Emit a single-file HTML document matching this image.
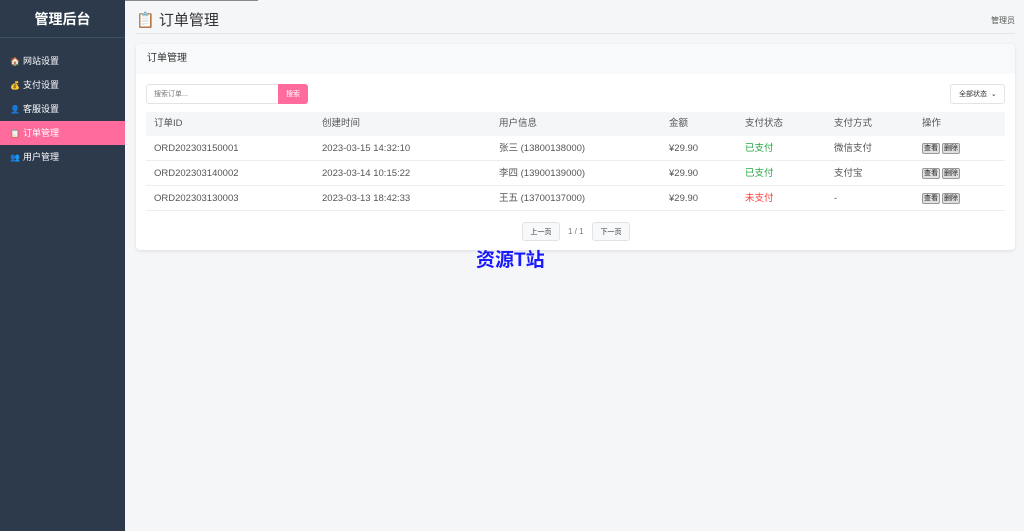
<!DOCTYPE html>
<html><head><meta charset="utf-8"><style>
*{margin:0;padding:0;box-sizing:border-box}
body{width:1024px;height:531px;overflow:hidden;background:#f5f6f8;font-family:"Liberation Sans","Noto Sans CJK SC",sans-serif;color:#444;position:relative;font-size:9px}
.sb{position:absolute;left:0;top:0;width:125px;height:531px;background:#2c3a4c}
.sb h1{color:#fff;font-size:14px;text-align:center;height:38px;line-height:38px;border-bottom:1px solid #3d5166}
.mi{position:absolute;left:0;width:125px;height:24px;line-height:24px;color:#fff;font-size:9px;padding-left:10px}
.mi span{display:inline-block;width:10px;font-size:8px;margin-right:3px}
.mi.act{background:#ff6b9d}
.top{position:absolute;left:125px;top:0;width:133px;height:1px;background:#888}
.hd{position:absolute;left:136px;top:9px;font-size:15px;color:#333}
.hl{position:absolute;left:136px;right:9px;top:33px;height:1px;background:#e6e6e6}
.adm{position:absolute;right:9px;top:15px;font-size:8px;color:#555}
.card{position:absolute;left:136px;top:44px;width:879px;height:206px;background:#fff;border-radius:4px;box-shadow:0 1px 3px rgba(0,0,0,.1)}
.ch{height:30px;background:#f8f9fa;padding-left:11px;line-height:30px;font-size:10px;color:#333;border-radius:4px 4px 0 0}
.in,.bt,.sel,.pg{display:flex;align-items:center}
.in{position:absolute;left:10px;top:40px;width:133px;height:20px;border:1px solid #e3e3e3;border-radius:3px 0 0 3px;font-size:7px;color:#777;padding-left:7px}
.bt{position:absolute;left:142px;top:40px;width:30px;height:20px;background:#ff6b9d;color:#fff;font-size:7px;justify-content:center;border-radius:0 3px 3px 0}
.sel{position:absolute;left:814px;top:40px;width:55px;height:20px;border:1px solid #e3e3e3;border-radius:3px;font-size:7px;color:#333;padding-left:8px}
.row{position:absolute;left:10px;width:859px;height:25px;line-height:25px;border-bottom:1px solid #eee;font-size:9.5px;color:#555}
.row.h{background:#f5f6f8;border:none;height:24px;line-height:24px;color:#555}
.row div{position:absolute;top:0}
.g{color:#28a745}.r{color:#ff3b3b}
.op b{display:inline-block;font-weight:normal;font-size:7px;line-height:10px;height:11px;padding:0 1px;background:#e0e0e0;border:1px solid #999;border-radius:2px;color:#222;margin-right:2px;vertical-align:middle}
.pg{position:absolute;top:178px;height:19px;border:1px solid #e3e3e3;border-radius:3px;background:#f8f9fa;font-size:7px;justify-content:center;color:#333}
.wm{position:absolute;left:476px;top:245px;font-size:19px;font-weight:bold;color:#1a1aff}
</style></head><body>
<div class="top"></div>
<div class="sb"><h1>管理后台</h1>
<div class="mi" style="top:49px"><span>🏠</span>网站设置</div>
<div class="mi" style="top:73px"><span>💰</span>支付设置</div>
<div class="mi" style="top:97px"><span>👤</span>客服设置</div>
<div class="mi act" style="top:121px"><span>📋</span>订单管理</div>
<div class="mi" style="top:145px"><span>👥</span>用户管理</div>
</div>
<div class="hd">📋 订单管理</div><div class="adm">管理员</div><div class="hl"></div>
<div class="card"><div class="ch">订单管理</div>
<div class="in">搜索订单...</div><div class="bt">搜索</div>
<div class="sel">全部状态 &nbsp;⌄</div>
<div class="row h" style="top:68px"><div style="left:8px">订单ID</div><div style="left:176px">创建时间</div><div style="left:353px">用户信息</div><div style="left:523px">金额</div><div style="left:599px">支付状态</div><div style="left:688px">支付方式</div><div style="left:776px">操作</div></div>
<div class="row" style="top:92px"><div style="left:8px">ORD202303150001</div><div style="left:176px">2023-03-15 14:32:10</div><div style="left:353px">张三 (13800138000)</div><div style="left:523px">¥29.90</div><div style="left:599px" class="g">已支付</div><div style="left:688px">微信支付</div><div style="left:776px" class="op"><b>查看</b><b>删除</b></div></div>
<div class="row" style="top:117px"><div style="left:8px">ORD202303140002</div><div style="left:176px">2023-03-14 10:15:22</div><div style="left:353px">李四 (13900139000)</div><div style="left:523px">¥29.90</div><div style="left:599px" class="g">已支付</div><div style="left:688px">支付宝</div><div style="left:776px" class="op"><b>查看</b><b>删除</b></div></div>
<div class="row" style="top:142px"><div style="left:8px">ORD202303130003</div><div style="left:176px">2023-03-13 18:42:33</div><div style="left:353px">王五 (13700137000)</div><div style="left:523px">¥29.90</div><div style="left:599px" class="r">未支付</div><div style="left:688px">-</div><div style="left:776px" class="op"><b>查看</b><b>删除</b></div></div>
<div class="pg" style="left:386px;width:38px">上一页</div>
<div style="position:absolute;left:432px;top:178px;line-height:19px;font-size:8px;color:#777">1 / 1</div>
<div class="pg" style="left:456px;width:38px">下一页</div>
</div>
<div class="wm">资源T站</div>
</body></html>
